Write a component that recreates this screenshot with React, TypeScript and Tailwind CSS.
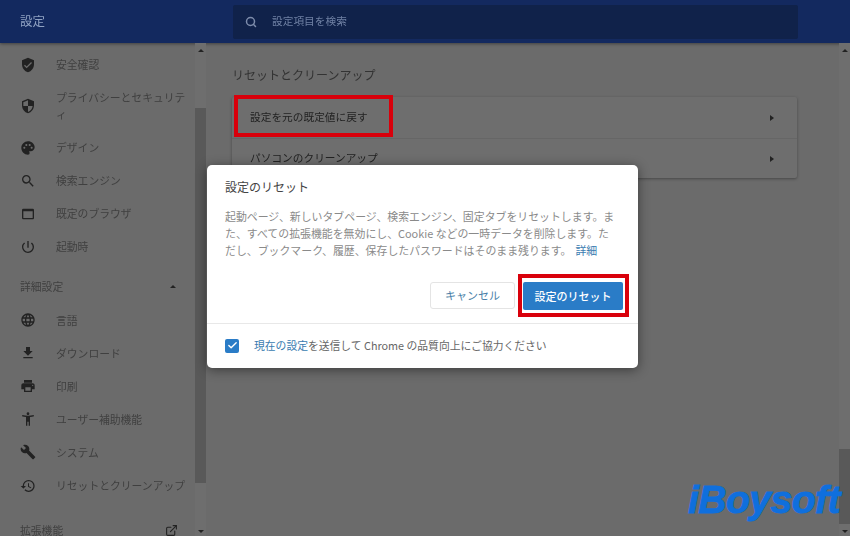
import React from 'react';
import { Check, ExternalLink, Search } from 'lucide-react';
import {
  MdAccessibilityNew,
  MdBuild,
  MdFileDownload,
  MdLanguage,
  MdPalette,
  MdPowerSettingsNew,
  MdPrint,
  MdRestore,
  MdSearch,
  MdSecurity,
  MdVerifiedUser,
  MdWebAsset,
} from 'react-icons/md';

const TOP_ITEMS = [
  { icon: MdVerifiedUser, label: '安全確認', cls: 'h-[33px]' },
  { icon: MdSecurity, label: 'プライバシーとセキュリティ', cls: 'h-[50px]' },
  { icon: MdPalette, label: 'デザイン', cls: 'h-[33px]' },
  { icon: MdSearch, label: '検索エンジン', cls: 'h-[33px]' },
  { icon: MdWebAsset, label: '既定のブラウザ', cls: 'h-[33px]' },
  { icon: MdPowerSettingsNew, label: '起動時', cls: 'h-[33px]' },
];

const ADVANCED_ITEMS = [
  { icon: MdLanguage, label: '言語' },
  { icon: MdFileDownload, label: 'ダウンロード' },
  { icon: MdPrint, label: '印刷' },
  { icon: MdAccessibilityNew, label: 'ユーザー補助機能' },
  { icon: MdBuild, label: 'システム' },
  { icon: MdRestore, label: 'リセットとクリーンアップ' },
];

function ScrollBar({ thumbClass }: { thumbClass: string }) {
  return (
    <div className="relative w-[11px] shrink-0 bg-[#6e6e6e]">
      <div className="absolute left-[3px] top-[6px] h-0 w-0 border-x-[3px] border-b-[3px] border-x-transparent border-b-[#222]" />
      <div className={`absolute left-0 w-[11px] bg-[#595959] ${thumbClass}`} />
      <div className="absolute bottom-[3px] left-[3px] h-0 w-0 border-x-[3px] border-t-[3px] border-x-transparent border-t-[#222]" />
    </div>
  );
}

function Sidebar() {
  return (
    <div className="flex w-[206px] shrink-0">
      <div className="flex-1 overflow-hidden pt-[5px] text-[10.8px] text-[#404040]">
        {TOP_ITEMS.map(item => (
          <div key={item.label} className={`flex items-center pl-[20px] pr-[2px] ${item.cls}`}>
            <item.icon className="h-[16px] w-[16px] shrink-0 text-[#222] blur-[0.4px]" />
            <span className="ml-[20px] leading-[17px] blur-[0.5px] [line-break:anywhere]">{item.label}</span>
          </div>
        ))}
        <div className="mt-[7px] flex h-[33px] items-center justify-between pl-[20px] pr-[19px]">
          <span className="blur-[0.5px]">詳細設定</span>
          <div className="h-0 w-0 border-x-[3px] border-b-[3px] border-x-transparent border-b-[#222]" />
        </div>
        {ADVANCED_ITEMS.map(item => (
          <div key={item.label} className="flex h-[33.2px] items-center pl-[20px]">
            <item.icon className="h-[16px] w-[16px] shrink-0 text-[#222] blur-[0.4px]" />
            <span className="ml-[20px] whitespace-nowrap blur-[0.5px]">{item.label}</span>
          </div>
        ))}
        <div className="mt-[20px] flex items-center justify-between pl-[20px] pr-[17px]">
          <span className="blur-[0.5px]">拡張機能</span>
          <ExternalLink className="h-[13px] w-[13px] text-[#222]" />
        </div>
      </div>
      <ScrollBar thumbClass="top-[65px] h-[375px]" />
    </div>
  );
}

function Dialog() {
  return (
    <div className="absolute left-[207px] top-[165px] h-[203px] w-[431px] rounded-[5px] bg-white text-[#5f6368] shadow-[0_2px_12px_rgba(0,0,0,0.45)]">
      <div className="px-[18px] pt-[14px] text-[12px] leading-[16px] text-[#444]">設定のリセット</div>
      <p className="mt-[13px] pl-[18px] pr-[10px] text-[10.9px] leading-[17px] text-[#8a8a8a]">
        起動ページ、新しいタブページ、検索エンジン、固定タブをリセットします。ま
        <br />
        た、すべての拡張機能を無効にし、Cookie などの一時データを削除します。た
        <br />
        だし、ブックマーク、履歴、保存したパスワードはそのまま残ります。
        <span className="ml-[4px] text-[#3a7cb0]">詳細</span>
      </p>
      <div className="mt-[23px] flex justify-end gap-[8px] pr-[15px]">
        <div className="flex h-[27px] w-[85px] items-center justify-center rounded-[3px] border border-[#e4e4e4] text-[11px] text-[#4a7fa8]">
          キャンセル
        </div>
        <div className="flex h-[28px] w-[100px] items-center justify-center rounded-[2px] bg-[#2a7cc7] text-[11px] font-medium text-white">
          設定のリセット
        </div>
      </div>
      <div className="mt-[13px] flex h-[44px] items-center border-t border-[#e8e8e8] pl-[18px] text-[10.8px] text-[#666]">
        <div className="flex h-[14px] w-[14px] items-center justify-center rounded-[2px] bg-[#2a7cc7]">
          <Check className="h-[11px] w-[11px] text-white" strokeWidth={3} />
        </div>
        <span className="ml-[15px]">
          <span className="text-[#3a7cb0]">現在の設定</span>を送信して Chrome の品質向上にご協力ください
        </span>
      </div>
      <div className="absolute left-[311px] top-[109px] h-[43px] w-[111px] border-[4px] border-[#d9000b]" />
    </div>
  );
}

export default function App() {
  return (
    <div
      className="relative flex h-[536px] w-[850px] flex-col overflow-hidden bg-[#6b6b6b]"
      style={{ fontFamily: '"Noto Sans CJK JP", "Noto Sans", sans-serif' }}
    >
      <header className="flex h-[43px] shrink-0 items-center bg-[#13295f] shadow-[0_1px_3px_rgba(0,0,0,0.4)]">
        <div className="w-[233px] shrink-0 pl-[20px] text-[12.5px] text-[#8fa1c2] blur-[0.5px]">設定</div>
        <div className="flex h-[34px] w-[565px] items-center rounded-[2px] bg-[#10224a] pl-[12px] text-[10.7px] text-[#6f80a3]">
          <Search className="h-[12px] w-[12px] text-[#7d8cab]" strokeWidth={3} />
          <span className="ml-[15px] blur-[0.5px]">設定項目を検索</span>
        </div>
      </header>

      <div className="flex min-h-0 flex-1">
        <Sidebar />
        <main className="flex-1 pl-[26px] pt-[23px]">
          <h2 className="text-[12px] leading-[18px] text-[#333] blur-[0.4px]">リセットとクリーンアップ</h2>
          <div className="mt-[13px] w-[565px] rounded-[2px] bg-[#6e6e6e] shadow-[0_1px_3px_rgba(0,0,0,0.35)]">
            <div className="relative flex h-[41px] items-center justify-between pl-[18px] pr-[23px] text-[10.7px] text-[#222]">
              <span className="blur-[0.4px]">設定を元の既定値に戻す</span>
              <div className="h-0 w-0 border-y-[3px] border-l-[4px] border-y-transparent border-l-[#222]" />
              <div className="absolute left-[2px] top-[-2px] h-[42px] w-[159px] border-[4px] border-[#d9000b]" />
            </div>
            <div className="flex h-[40px] items-center justify-between border-t border-[#666] pl-[18px] pr-[23px] text-[10.7px] text-[#222]">
              <span className="blur-[0.4px]">パソコンのクリーンアップ</span>
              <div className="h-0 w-0 border-y-[3px] border-l-[4px] border-y-transparent border-l-[#222]" />
            </div>
          </div>
        </main>
        <ScrollBar thumbClass="bottom-[12px] h-[75px]" />
      </div>

      <Dialog />

      <div
        className="absolute left-[688px] top-[472px] text-[39px] font-bold italic leading-[56px] tracking-[-0.5px] text-[#0f6fdd] [-webkit-text-stroke:1px_#0f6fdd]"
        style={{ fontFamily: '"Liberation Sans", sans-serif' }}
      >
        iBoysoft
      </div>
    </div>
  );
}
